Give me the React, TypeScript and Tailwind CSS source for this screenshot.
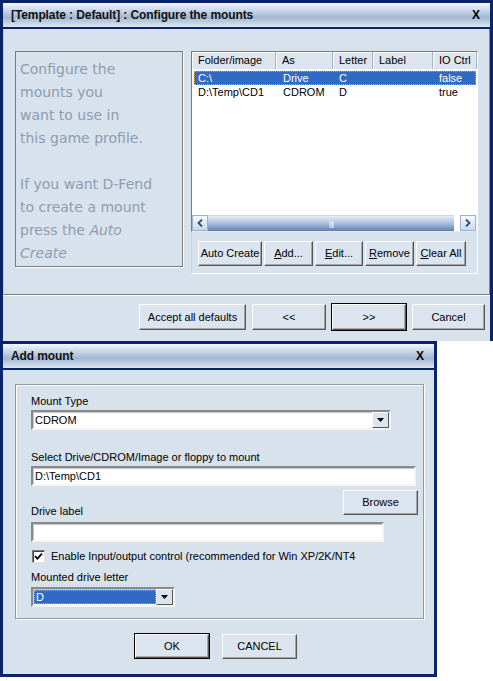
import type { ReactNode } from 'react'
import clsx from 'clsx'

const FONT = "font-['Liberation_Sans',Arial,sans-serif]"

function TitleBar({ title }: { title: string }) {
  return (
    <div className="flex items-center justify-between h-[26px] pl-[8px] pr-[10px] border-b-2 border-[#0a246a] bg-[linear-gradient(to_bottom,#f4f7fb,#c3d2e5_35%,#a2b7d2_60%,#dce6f0)]">
      <span className="text-[12px] font-bold text-[#111] tracking-[-0.1px]">{title}</span>
      <span className="text-[12px] font-bold text-black">X</span>
    </div>
  )
}

function Btn({
  children,
  className,
  def,
}: {
  children: ReactNode
  className?: string
  def?: boolean
}) {
  return (
    <div
      className={clsx(
        'flex items-center justify-center shrink-0 bg-[#dce5ef] text-[11px] text-black border border-t-white border-l-white border-r-[#555] border-b-[#555] shadow-[inset_-1px_-1px_0_#a6a6a6]',
        def && 'outline outline-1 outline-black',
        className
      )}
    >
      {children}
    </div>
  )
}

function DropArrow() {
  return (
    <div className="flex items-center justify-center w-[17px] h-[16px] bg-[#dce5ef] border border-t-white border-l-white border-r-[#555] border-b-[#555]">
      <svg width="7" height="4" viewBox="0 0 7 4">
        <path d="M0 0h7L3.5 4z" fill="#000" />
      </svg>
    </div>
  )
}

function Sunken({ className, children }: { className?: string; children?: ReactNode }) {
  return (
    <div
      className={clsx(
        'flex items-center h-[20px] bg-white border-2 border-t-[#8a8a8a] border-l-[#8a8a8a] border-b-[#f4f4f4] border-r-[#f4f4f4] shadow-[inset_1px_1px_0_#c5c5c5] text-[11px] text-black',
        className
      )}
    >
      {children}
    </div>
  )
}

const columns = [
  { name: 'Folder/image', w: 'w-[84px]' },
  { name: 'As', w: 'w-[57px]' },
  { name: 'Letter', w: 'w-[40px]' },
  { name: 'Label', w: 'w-[60px]' },
  { name: 'IO Ctrl', w: 'w-[44px]' },
]

const mounts = [
  { folder: 'C:\\', as: 'Drive', letter: 'C', label: '', io: 'false' },
  { folder: 'D:\\Temp\\CD1', as: 'CDROM', letter: 'D', label: '', io: 'true' },
]

function ListView() {
  return (
    <div className="flex flex-col w-[287px] h-[181px] bg-white border border-[#7a7a7a] border-r-white border-b-[#e8e8e8]">
      <div className="flex h-[18px] bg-[#dde5ee] border-b border-white">
        {columns.map((c) => (
          <div
            key={c.name}
            className={clsx(
              'flex items-center pl-[6px] text-[11px] text-black border-r border-[#a9b3bf] shadow-[inset_1px_1px_0_#fff]',
              c.w
            )}
          >
            {c.name}
          </div>
        ))}
      </div>
      <div className="flex flex-col flex-1 pt-[1px] pl-[2px]">
        {mounts.map((m, i) => (
          <div
            key={m.folder}
            className={clsx(
              'flex h-[14px] items-center text-[11px] w-[282px]',
              i === 0 ? 'bg-[#316ac5] text-white outline outline-1 outline-dotted outline-[#e0a040] -outline-offset-1' : 'text-black'
            )}
          >
            <span className="w-[82px] pl-[4px]">{m.folder}</span>
            <span className="w-[57px] pl-[7px]">{m.as}</span>
            <span className="w-[40px] pl-[6px]">{m.letter}</span>
            <span className="w-[60px] pl-[6px]">{m.label}</span>
            <span className="pl-[6px]">{m.io}</span>
          </div>
        ))}
      </div>
      {/* horizontal scrollbar */}
      <div className="flex h-[16px] bg-[#f0f4f8]">
        <div className="flex items-center justify-center w-[16px] bg-[linear-gradient(to_bottom,#f6f9fd,#cbd8ea)] border border-[#9fb2cc]">
          <svg width="6" height="8" viewBox="0 0 6 8">
            <path d="M5 0.5 1.5 4 5 7.5" stroke="#2a4a80" strokeWidth="1.8" fill="none" />
          </svg>
        </div>
        <div className="flex items-center justify-center w-[246px] bg-[linear-gradient(to_bottom,#e6eef8,#a9bedb_50%,#5e7fae)] border-t border-[#c9d6e8]">
          <span className="text-[8px] leading-none text-[#eef3fa] tracking-[-1px]">||||</span>
        </div>
        <div className="w-[6px] bg-white" />
        <div className="flex items-center justify-center w-[16px] bg-[linear-gradient(to_bottom,#f6f9fd,#cbd8ea)] border border-[#9fb2cc]">
          <svg width="6" height="8" viewBox="0 0 6 8">
            <path d="M1 0.5 4.5 4 1 7.5" stroke="#2a4a80" strokeWidth="1.8" fill="none" />
          </svg>
        </div>
      </div>
    </div>
  )
}

const info = [
  'Configure the',
  'mounts you',
  'want to use in',
  'this game profile.',
  '\u00a0',
  'If you want D-Fend',
  'to create a mount',
  'press the Auto',
  'Create',
]

function ConfigureWindow() {
  return (
    <div className="flex flex-col w-[493px] h-[341px] border-[3px] border-b-0 border-[#0a246a] bg-[#d8e2ec]">
      <TitleBar title="[Template : Default] : Configure the mounts" />
      <div className="flex h-[266px] pl-[11px] pt-[22px] border-l border-[#b7c8df] border-r border-r-[#8a8a8a] border-b border-b-[#7d7d7d]">
        <div className="w-[168px] h-[216px] pl-[4px] pt-[6px] border border-[#7a7a7a] shadow-[1px_1px_0_#fff] font-['DejaVu_Sans',sans-serif] text-[14px] leading-[23px] text-[#8d9cb1]">
          {info.map((l, i) => (
            <div key={i} className={i === 7 ? 'whitespace-pre' : ''}>
              {i === 7 ? (
                <>
                  press the <i>Auto</i>
                </>
              ) : i === 8 ? (
                <i>Create</i>
              ) : (
                l
              )}
            </div>
          ))}
        </div>
        <div className="flex flex-col ml-[8px]">
          <ListView />
          <div className="flex gap-[2px] h-[42px] pt-[9px] pl-[6px] border-r border-white border-b border-b-white border-l border-l-[#c5d2e2]">
            <Btn className="w-[64px] h-[25px]">Auto Create</Btn>
            <Btn className="w-[49px] h-[25px]">
              <span><u>A</u>dd...</span>
            </Btn>
            <Btn className="w-[48px] h-[25px]">
              <span><u>E</u>dit...</span>
            </Btn>
            <Btn className="w-[49px] h-[25px]">
              <span><u>R</u>emove</span>
            </Btn>
            <Btn className="w-[50px] h-[25px]">
              <span><u>C</u>lear All</span>
            </Btn>
          </div>
        </div>
      </div>
      <div className="flex justify-end gap-[6px] pt-[8px] pr-[5px] border-t border-white">
        <Btn className="w-[107px] h-[26px]">Accept all defaults</Btn>
        <Btn className="w-[74px] h-[26px]">&lt;&lt;</Btn>
        <Btn className="w-[74px] h-[26px]" def>
          &gt;&gt;
        </Btn>
        <Btn className="w-[73px] h-[26px]">Cancel</Btn>
      </div>
    </div>
  )
}

function AddMountWindow() {
  return (
    <div className="flex flex-col w-[437px] h-[336px] border-[3px] border-[#0a246a] bg-[#d8e2ec]">
      <TitleBar title="Add mount" />
      <div className="flex flex-col pl-[12px] pt-[14px]">
        <div className="flex flex-col w-[409px] h-[235px] pl-[15px] pt-[10px] border border-[#8f9aa6] shadow-[inset_1px_1px_0_#fff,1px_1px_0_#fff] text-[11px] text-black">
          <div className="leading-[13px]">Mount Type</div>
          <Sunken className="w-[360px] mt-[2px] justify-between pl-[2px] pr-[0px]">
            <span>CDROM</span>
            <DropArrow />
          </Sunken>
          <div className="leading-[13px] mt-[21px]">Select Drive/CDROM/Image or floppy to mount</div>
          <Sunken className="w-[385px] mt-[2px] pl-[2px]">
            <span>D:\Temp\CD1</span>
          </Sunken>
          <div className="flex justify-between w-[387px] h-[32px]">
            <span className="self-end leading-[13px]">Drive label</span>
            <Btn className="w-[75px] h-[25px] mt-[4px]">Browse</Btn>
          </div>
          <Sunken className="w-[353px] mt-[4px]" />
          <div className="flex items-center gap-[6px] mt-[8px] h-[13px] pl-[1px]">
            <div className="flex items-center justify-center w-[13px] h-[13px] bg-white border border-t-[#7a7a7a] border-l-[#7a7a7a] border-b-[#e0e0e0] border-r-[#e0e0e0] shadow-[inset_1px_1px_0_#404040]">
              <svg width="9" height="9" viewBox="0 0 9 9">
                <path d="M1 4.2 3.4 6.6 8 1.6" stroke="#000" strokeWidth="1.8" fill="none" />
              </svg>
            </div>
            <span>Enable Input/output control (recommended for Win XP/2K/NT4</span>
          </div>
          <div className="leading-[13px] mt-[8px]">Mounted drive letter</div>
          <Sunken className="w-[144px] mt-[3px] justify-between pl-[1px]">
            <span className="flex items-center h-[14px] w-[122px] pl-[2px] bg-[#316ac5] text-white outline outline-1 outline-dotted outline-[#e0a040] -outline-offset-1">
              D
            </span>
            <DropArrow />
          </Sunken>
        </div>
        <div className="flex gap-[13px] pl-[120px] mt-[15px]">
          <Btn className="w-[74px] h-[24px]" def>
            OK
          </Btn>
          <Btn className="w-[75px] h-[25px]">CANCEL</Btn>
        </div>
      </div>
    </div>
  )
}

export default function App() {
  return (
    <div className={clsx('flex flex-col w-[493px] h-[681px] bg-white', FONT)}>
      <ConfigureWindow />
      <AddMountWindow />
    </div>
  )
}
